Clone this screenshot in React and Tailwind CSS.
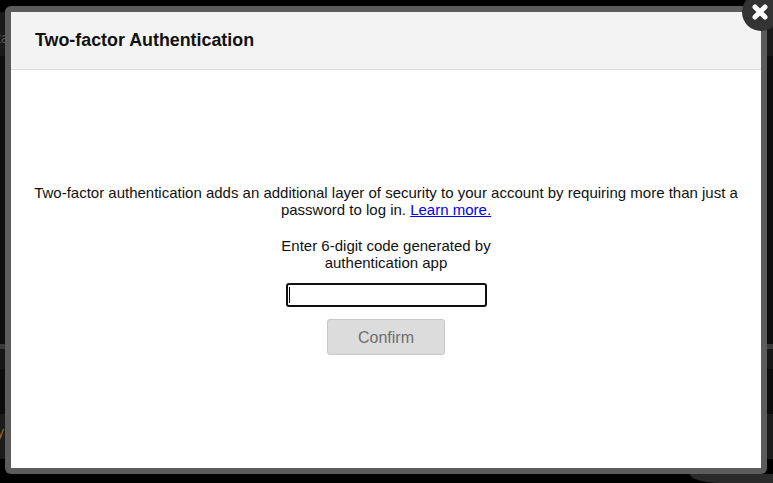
import React from 'react';

function App() {
    return (
        <div className="relative h-[483px] w-[773px] overflow-hidden bg-black font-['Liberation_Sans',Arial,sans-serif]">
            {/* Dimmed page behind the modal */}
            <div className="absolute inset-0 flex flex-col">
                <div className="h-[12px] bg-black" />
                <div className="h-[44px] bg-[#1a1a1a]" />
                <div className="h-[288px] bg-[#0e0e0e]" />
                <div className="h-[5px] bg-[#3a3a3a]" />
                <div className="h-[20px] bg-[#161616]" />
                <div className="h-[45px] bg-[#0c0c0c]" />
                <div className="h-[45px] bg-[#1c1c1c]" />
                <div className="flex-1 bg-black" />
            </div>
            <div className="absolute bottom-0 right-0 h-[9px] w-[83px] rounded-bl-[30px_9px] bg-[#2a2a2a]" />
            <span className="absolute left-[-3px] top-[28px] text-[14px] text-[#555]">ta</span>
            <span className="absolute left-[-3px] top-[422px] text-[14px] text-[#8a6a30]">y</span>

            {/* Modal */}
            <div className="relative ml-[5px] mt-[6px] h-[468px] w-[762px] rounded-[6px] bg-[#5c5c5c] p-[6px]">
                <div className="flex h-[456px] w-[750px] flex-col bg-white">
                    <div className="flex h-[58px] items-center border-b border-[#dcdcdc] bg-[#f3f3f3] pb-[2px] pl-[24px]">
                        <h1 className="text-[17.85px] font-bold leading-[20px] text-[#111]">Two-factor Authentication</h1>
                    </div>
                    <div className="flex flex-col items-center px-[20px] pt-[114px] text-center text-[15px] leading-[17px] text-[#111]">
                        <p>
                            Two-factor authentication adds an additional layer of security to your account by requiring more than just a
                            password to log in.{' '}
                            <a href="#" className="text-[#0000ee] underline">Learn more.</a>
                        </p>
                        <p className="mt-[19px] w-[240px]">Enter 6-digit code generated by authentication app</p>
                        <div className="mt-[12px] flex h-[24px] w-[201px] items-center rounded-[3px] border-2 border-[#101010] pl-[1px]">
                            <span className="h-[16px] w-px bg-black" />
                        </div>
                        <button className="mt-[12px] h-[36px] w-[118px] rounded-[3px] border border-[#c8c8c8] bg-[#dcdcdc] text-[16px] text-[#6e6e6e]">
                            Confirm
                        </button>
                    </div>
                </div>
            </div>

            {/* Close button */}
            <div className="absolute right-[-7px] top-[-7px] flex h-[38px] w-[38px] items-center justify-center rounded-full bg-[#333] pr-[3px]">
                <svg width="16" height="16" viewBox="0 0 16 16" fill="none">
                    <path d="M3 3L13 13M13 3L3 13" stroke="#fff" strokeWidth="5" strokeLinecap="round" />
                </svg>
            </div>
        </div>
    );
}

export default App;
